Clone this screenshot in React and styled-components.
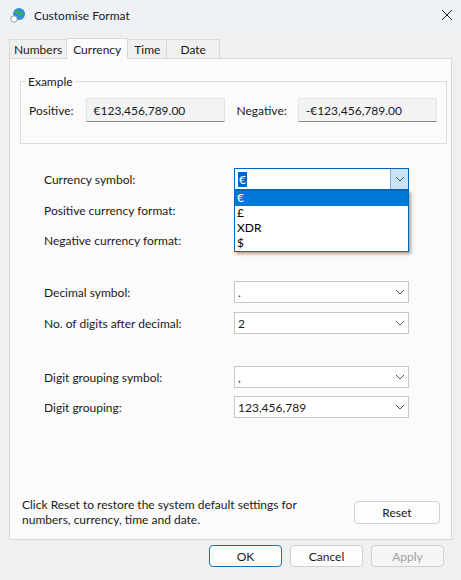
import React from "react";
import styled, { createGlobalStyle } from "styled-components";

const G = createGlobalStyle`
  html,body{margin:0;padding:0;background:#f0f0f0;}
  body{font-family:Lato,"Noto Sans",sans-serif;font-size:12px;color:#1a1a1a;}
`;
const Win = styled.div`width:461px;height:580px;display:flex;flex-direction:column;background:#f0f0f0;overflow:hidden;`;
const Title = styled.div`height:30px;flex-shrink:0;display:flex;align-items:center;padding:0 8px 0 10px;background:#eef1f6;gap:8px;font-size:12px;`;
const TitleText = styled.div`flex:1;`;
const Body = styled.div`flex-shrink:0;display:flex;flex-direction:column;padding:8px 9px 0 9px;`;
const Tabs = styled.div`display:flex;height:20px;align-items:flex-end;flex-shrink:0;`;
const Tab = styled.div`height:${p=>p.$a?20:18}px;padding:0 ${p=>p.$p}px;display:flex;align-items:center;border:1px solid #d9d9d9;border-bottom:none;background:${p=>p.$a?"#fbfbfb":"#f0f0f0"};margin-right:-1px;position:relative;z-index:${p=>p.$a?2:1};margin-bottom:${p=>p.$a?-1:0}px;`;
const Panel = styled.div`height:482px;box-sizing:border-box;flex-shrink:0;border:1px solid #d9d9d9;background:#fbfbfb;padding:15px 8px 0 10px;display:flex;flex-direction:column;position:relative;`;
const Group = styled.fieldset`margin:0;border:1px solid #dcdcdc;padding:9px 9px 17px 8px;display:flex;align-items:center;height:42px;`;
const Legend = styled.legend`padding:0 2px;margin-left:-3px;font-size:12px;`;
const Lbl = styled.span`margin-right:${p=>p.$m}px;`;
const Sample = styled.div`width:${p=>p.$w}px;height:24px;border:1px solid #e4e4e4;border-bottom:1px solid #8a8a8a;background:#f3f3f3;display:flex;align-items:center;padding-left:7px;box-sizing:border-box;margin-right:${p=>p.$m||0}px;`;
const Form = styled.div`display:flex;flex-direction:column;padding:24px 0 0 24px;`;
const Row = styled.div`display:flex;align-items:center;height:22px;margin-top:${p=>p.$t}px;position:relative;`;
const RowLbl = styled.div`width:190px;`;
const Combo = styled.div`width:175px;height:22px;box-sizing:border-box;border:1px solid ${p=>p.$open?"#0067c0":"#c8c8c8"};background:#fff;display:flex;align-items:center;padding-left:3px;`;
const ComboText = styled.div`flex:1;`;
const Sel = styled.span`background:#0067c0;color:#fff;padding:0 1px;`;
const Arrow = styled.div`width:17px;height:20px;display:flex;align-items:center;justify-content:center;background:${p=>p.$open?"#cce4f7":"transparent"};border-left:${p=>p.$open?"1px solid #7eb4ea":"none"};`;
const List = styled.div`position:absolute;left:190px;top:22px;width:175px;box-sizing:border-box;border:1px solid #0067c0;background:#fff;box-shadow:2px 2px 3px rgba(0,0,0,.35);z-index:5;`;
const Item = styled.div`height:15px;line-height:14px;padding-left:2px;background:${p=>p.$s?"#0078d7":"#fff"};color:${p=>p.$s?"#fff":"#000"};`;
const Foot = styled.div`margin-top:auto;display:flex;align-items:center;padding:0 3px 12px 2px;justify-content:space-between;`;
const Btn = styled.button`font:inherit;font-size:12px;width:${p=>p.$w||73}px;height:${p=>p.$h||22}px;border:1px solid ${p=>p.$def?"#1d6fb0":"#d0d0d0"};border-radius:4px;background:${p=>p.$dis?"#f5f5f5":"#fdfdfd"};color:${p=>p.$dis?"#a0a0a0":"#1a1a1a"};box-shadow:${p=>p.$def?"inset 0 0 0 1px #fff":"none"};`;
const Buttons = styled.div`display:flex;justify-content:flex-end;gap:8px;padding:5px 8px 0 0;`;

const Chev = () => <svg width="10" height="6" viewBox="0 0 10 6"><path d="M1 1l4 4 4-4" fill="none" stroke="#555" strokeWidth="1"/></svg>;

const C = ({v, open}) => (
  <Combo $open={open}><ComboText>{v}</ComboText><Arrow $open={open}><Chev/></Arrow></Combo>
);

export default function App(){
  return <Win><G/>
    <Title>
      <svg width="16" height="16" viewBox="0 0 16 16"><circle cx="9" cy="7" r="6" fill="#2a8fd8"/><path d="M5 4c2 1 3 0 4 2s3 1 4 0" stroke="#3fb34f" strokeWidth="2.5" fill="none"/><circle cx="4" cy="12" r="3.2" fill="#fff" stroke="#999"/></svg>
      <TitleText>Customise Format</TitleText>
      <svg width="12" height="12" viewBox="0 0 12 12"><path d="M1 1l10 10M11 1L1 11" stroke="#222" strokeWidth="1"/></svg>
    </Title>
    <Body>
      <Tabs>
        <Tab $p={4}>Numbers</Tab><Tab $a $p={6}>Currency</Tab><Tab $p={6}>Time</Tab><Tab $p={13}>Date</Tab>
      </Tabs>
      <Panel>
        <Group><Legend>Example</Legend>
          <Lbl $m={12}>Positive:</Lbl><Sample $w={139} $m={12}>€123,456,789.00</Sample>
          <Lbl $m={11}>Negative:</Lbl><Sample $w={139}>-€123,456,789.00</Sample>
        </Group>
        <Form>
          <Row $t={0}><RowLbl>Currency symbol:</RowLbl><C open v={<Sel>€</Sel>}/>
            <List><Item $s>€</Item><Item>£</Item><Item>XDR</Item><Item>$</Item></List></Row>
          <Row $t={9}><RowLbl>Positive currency format:</RowLbl></Row>
          <Row $t={8}><RowLbl>Negative currency format:</RowLbl></Row>
          <Row $t={30}><RowLbl>Decimal symbol:</RowLbl><C v="."/></Row>
          <Row $t={9}><RowLbl>No. of digits after decimal:</RowLbl><C v="2"/></Row>
          <Row $t={32}><RowLbl>Digit grouping symbol:</RowLbl><C v=","/></Row>
          <Row $t={8}><RowLbl>Digit grouping:</RowLbl><C v="123,456,789"/></Row>
        </Form>
        <Foot>
          <div>Click Reset to restore the system default settings for<br/>numbers, currency, time and date.</div>
          <Btn $w={86} $h={23}>Reset</Btn>
        </Foot>
      </Panel>
      <Buttons><Btn $def>OK</Btn><Btn>Cancel</Btn><Btn $dis>Apply</Btn></Buttons>
    </Body>
  </Win>;
}
